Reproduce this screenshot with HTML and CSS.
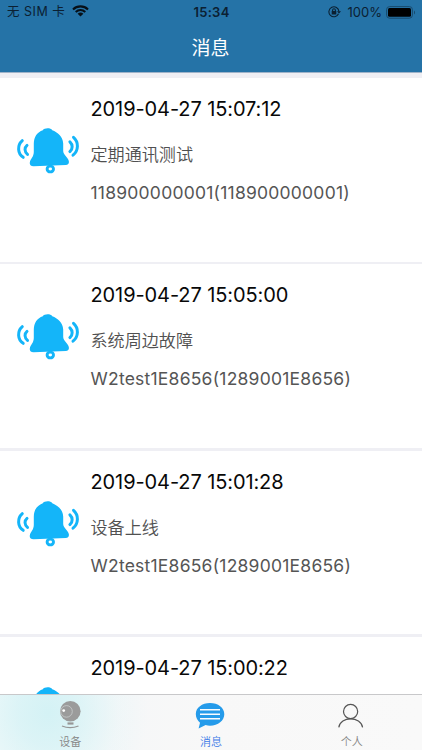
FILE: index.html
```html
<!DOCTYPE html>
<html lang="zh-CN">
<head>
<meta charset="utf-8">
<title>消息</title>
<link rel="stylesheet" href="styles.css">
</head>
<body>
<svg width="0" height="0" class="defs">
  <symbol id="bell" viewBox="0 0 64 48">
    <path fill="#14b5f9" d="M26.8 3.2C28.2.7 34.7.5 36.3 3.2C41.5 5.2 46.9 9.5 47.2 16.5V24C47.3 28.2 52.4 30.2 52.9 34.5C53.2 36.7 51.8 38 49.8 38.1L17.6 39.2C14.8 39.2 13.4 37.8 13.8 35.5C14.3 32 17.7 30.1 17.8 25V17C17.8 9.6 21.3 5.2 26.8 3.2Z"/>
    <g fill="none" stroke="#14b5f9" stroke-linecap="round">
      <ellipse cx="34.3" cy="42" rx="3.2" ry="2.9" stroke-width="2.9"/>
      <path stroke-width="3" d="M6.3 13.7C1.2 18.2 1.3 26.3 7.2 30.3M11 18.4C8.2 20.7 8.4 24.7 11.5 27.4M57.5 10.3C62.9 15 62.7 23.5 57 28.2M53.9 14.8C56.8 17.6 57 21.7 53.9 24.6"/>
    </g>
  </symbol>
</svg>
<div class="app">
  <header class="header">
    <div class="status">
      <div class="carrier"><span>无 SIM 卡</span>
        <svg class="wifi" width="17" height="12" viewBox="0 0 17 12"><g fill="none" stroke="#071018" stroke-width="2.1"><path d="M1 4.4C5.2.4 11.8.4 16 4.4M3.7 7C6.5 4.5 10.5 4.5 13.3 7"/></g><path fill="#071018" d="M5.6 8.7C7.3 7.2 9.7 7.2 11.4 8.7L8.5 11.6Z"/></svg>
      </div>
      <div class="clock">15:34</div>
      <div class="power">
        <svg width="13" height="12" viewBox="0 0 13 12"><g fill="none" stroke="#0b2032" stroke-width="1.1"><path d="M10.5 7.8A5 5 0 1 1 10.9 5.4M4.6 5.2V4.2a1.4 1.4 0 0 1 2.8 0v1"/></g><path fill="#0b2032" d="M3.7 5.1h4.6v3.5H3.7zM9 5.2h4l-2 2.4z"/></svg>
        <span class="percent">100%</span>
        <svg width="30" height="13" viewBox="0 0 30 13"><rect x=".6" y=".6" width="25.8" height="11.6" rx="3" fill="none" stroke="#184a6d" stroke-width="1"/><rect x="2" y="2" width="23" height="8.8" rx="1.5" fill="#000"/><path d="M28 4.4c1.4.5 1.4 3.5 0 4z" fill="#184a6d"/></svg>
      </div>
    </div>
    <h1>消息</h1>
  </header>
  <main class="list">
    <article class="card">
      <svg class="bell"><use href="#bell"/></svg>
      <div class="body"><h2>2019-04-27 15:07:12</h2><p class="event">定期通讯测试</p><p class="device">118900000001(118900000001)</p></div>
    </article>
    <article class="card">
      <svg class="bell"><use href="#bell"/></svg>
      <div class="body"><h2>2019-04-27 15:05:00</h2><p class="event">系统周边故障</p><p class="device">W2test1E8656(1289001E8656)</p></div>
    </article>
    <article class="card">
      <svg class="bell"><use href="#bell"/></svg>
      <div class="body"><h2>2019-04-27 15:01:28</h2><p class="event">设备上线</p><p class="device">W2test1E8656(1289001E8656)</p></div>
    </article>
    <article class="card">
      <svg class="bell"><use href="#bell"/></svg>
      <div class="body"><h2>2019-04-27 15:00:22</h2></div>
    </article>
  </main>
  <nav class="tabs">
    <a class="tab">
      <svg width="28" height="30" viewBox="0 0 28 30"><circle cx="14.3" cy="11.3" r="10.3" fill="#9b9b9b"/><circle cx="10.5" cy="11.4" r="5.8" fill="none" stroke="#c9cdcd" stroke-width=".8"/><circle cx="7.7" cy="10.6" r="1.4" fill="#fff"/><path d="M11.5 22.4h6v2.2h-6z" fill="#969696"/><path d="M6 26Q14 29.4 22.5 26" fill="none" stroke="#969696" stroke-width="1.3"/></svg>
      <span>设备</span>
    </a>
    <a class="tab active">
      <svg width="30" height="30" viewBox="0 0 30 30"><path fill="#259bea" d="M15 3C7 3 .8 7.7.8 14C.8 18 2.7 20.7 5 22.7L3.6 28.4L10.6 25.1C12 25.5 13.4 25.7 15 25.7C23.1 25.7 29.3 20.5 29.3 14.2C29.3 7.7 23.1 3 15 3Z"/><path d="M5 9.8H25M5 14.3H25M5 18.8H25" stroke="#f8fcff" stroke-width="1.4"/></svg>
      <span>消息</span>
    </a>
    <a class="tab">
      <svg width="28" height="30" viewBox="0 0 28 30"><g fill="none" stroke="#555" stroke-width="1.2"><circle cx="13.6" cy="11.5" r="7.1"/><path d="M1.8 27.4C3.2 15.9 24 15.9 25.6 27.4"/></g></svg>
      <span>个人</span>
    </a>
  </nav>
</div>
</body>
</html>
```
FILE: styles.css
```css
* { box-sizing: border-box; }
body { margin: 0; font-family: Inter, "Noto Sans CJK SC", sans-serif; }
h1, h2, p { margin: 0; font-weight: 400; }
svg { display: block; flex: none; }
.defs { position: absolute; }
.app { height: 750px; display: flex; flex-direction: column; overflow: hidden; background: #efeff4; }
.header { height: 73px; flex: none; background: #2573a7; border-bottom: 1px solid #9fb3c9; }
.status { height: 24px; display: grid; grid-template-columns: 1fr 60px 1fr; align-items: center; padding: 0 6px 0 7px; color: #0b2032; font-size: 12.5px; line-height: 24px; }
.carrier { display: flex; gap: 7px; letter-spacing: 0.5px; }
.wifi { margin-top: 5px; }
.clock { text-align: center; font-weight: 600; font-size: 13px; letter-spacing: 0.3px; }
.power { display: flex; align-items: center; justify-content: flex-end; }
.percent { margin: 0 4px 0 7px; font-size: 13px; }
h1 { text-align: center; color: #fff; font-size: 19px; font-weight: 400; line-height: 50px; text-indent: -1px; }
.list { flex: 1; min-height: 0; overflow: hidden; padding-top: 5px; }
.card { height: 183.6px; margin-bottom: 2.8px; display: flex; background: #fff; padding-left: 16px; }
.bell { width: 64px; height: 48px; margin-top: 49px; }
.body { padding: 16px 0 0 10.5px; white-space: nowrap; }
h2 { color: #080808; font-size: 20px; line-height: 31px; letter-spacing: -0.1px; }
.event { margin-top: 15px; color: #505050; font-size: 17.1px; line-height: 30px; font-weight: 350; }
.device { margin-top: 8px; color: #555; font-size: 17.5px; line-height: 30px; letter-spacing: 0.23px; }
.tabs { height: 56px; flex: none; display: grid; grid-template-columns: repeat(3, 1fr); border-top: 1px solid #c8c8ca; background: radial-gradient(ellipse 100px 110px at 48px 18px, #d4f2f5, rgba(212, 242, 245, 0.75) 30%, rgba(225, 245, 247, 0.3) 70%, transparent), linear-gradient(90deg, #f2f9fa, #f6f7f8 32%, #f8f8f8 50%, #f9f9f9); }
.tab { display: flex; flex-direction: column; align-items: center; padding-top: 5px; color: #858585; font-size: 11px; line-height: 25px; }
.tab svg { margin-left: -1px; }
.tab span { font-weight: 350; }
.active { color: #3b78e7; }
```
